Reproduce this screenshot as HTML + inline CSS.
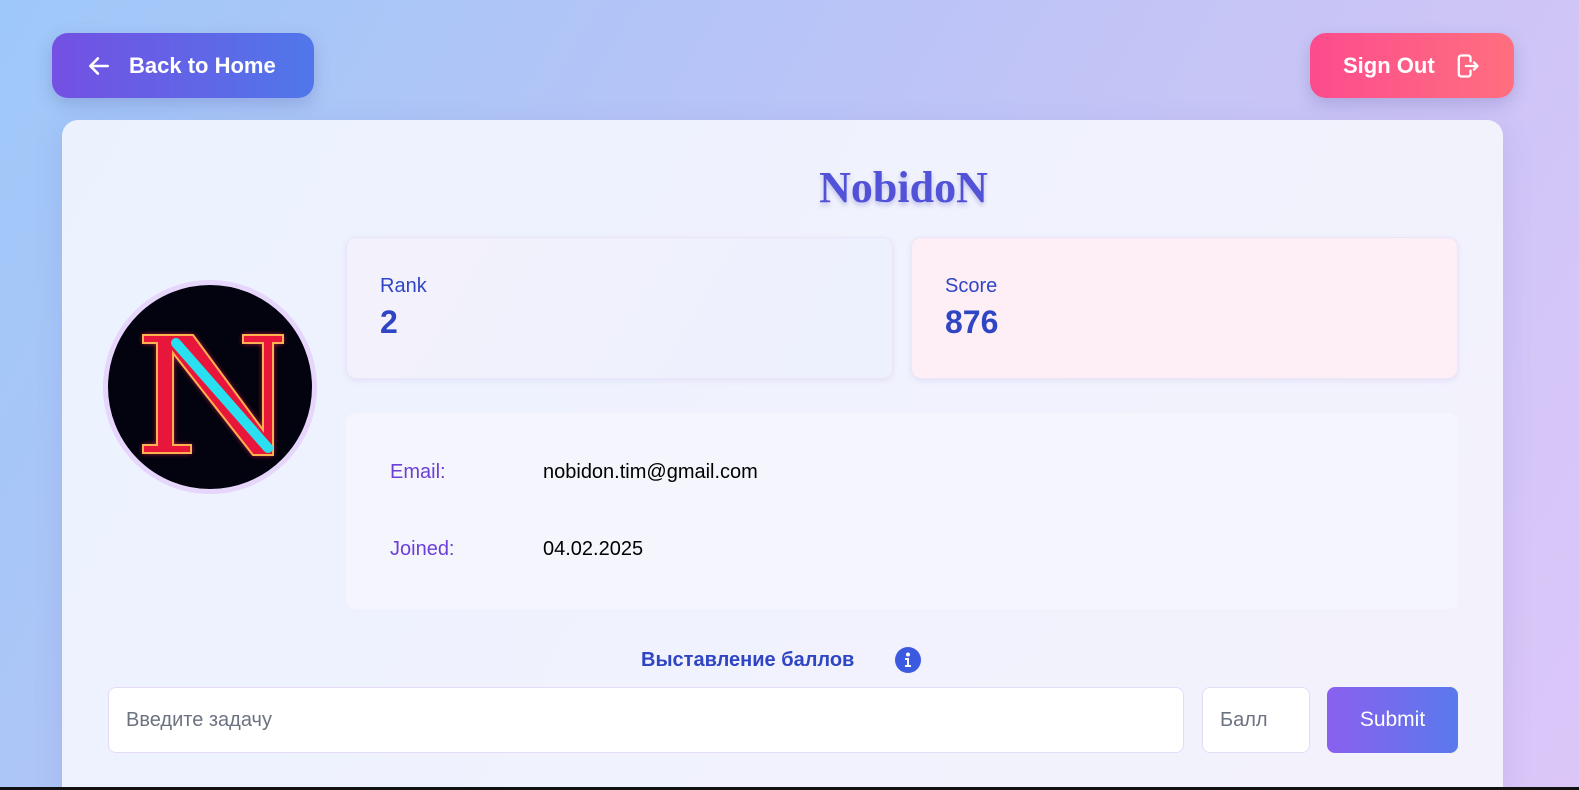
<!DOCTYPE html>
<html style="overflow:hidden;width:1579px;height:790px"><head><meta charset="utf-8"><style>
*{box-sizing:border-box;margin:0;padding:0}
body{width:1579px;height:790px;overflow:hidden;font-family:"Liberation Sans","Noto Sans CJK SC",sans-serif;background:linear-gradient(120deg,#9ec8f8 0%,#b5c4f7 35%,#cbc5f6 70%,#dcc6f8 100%);position:relative}
.btn{position:absolute;top:33px;height:65px;border-radius:16px;color:#fff;font-weight:bold;font-size:22px;display:flex;align-items:center;box-shadow:0 6px 16px rgba(80,80,160,.25)}
.back{left:52px;width:262px;background:linear-gradient(90deg,#7450e3,#5077ea);padding-left:34px}
.out{left:1310px;width:204px;background:linear-gradient(90deg,#fd4b8e,#ff6f7e);padding-left:33px}
.card{position:absolute;left:62px;top:120px;width:1441px;height:670px;border-radius:16px 16px 0 0;background:linear-gradient(120deg,#ebf2fe,#f1f2fd 60%,#f3f1fc);box-shadow:0 8px 30px rgba(100,90,180,.15)}
.name{position:absolute;left:0;width:100%;top:162px;text-align:center;font-family:"Liberation Serif",serif;font-weight:bold;font-size:44px;color:#5252d8;text-shadow:0 3px 5px rgba(80,80,180,.3);padding-left:228px}
.stat{position:absolute;top:237px;width:547px;height:142px;border-radius:10px;border:1px solid #ece4f8;box-shadow:0 2px 6px rgba(120,100,200,.1);padding:37px 0 0 33px;color:#2f45c4}
.stat .l{font-size:20px}.stat .v{font-size:32px;font-weight:bold;margin-top:6px}
.info{position:absolute;left:346px;top:413px;width:1112px;height:196px;border-radius:10px;background:#f5f6fd;font-size:20px}
.row{position:absolute;left:44px}
.row b{font-weight:normal;color:#6c3fd6;display:inline-block;width:153px}
.av{position:absolute;left:103px;top:280px;width:214px;height:214px;border-radius:50%;background:#02030f;border:5px solid #e6d6fb;overflow:hidden}
.ttl{position:absolute;top:649px;left:641px;font-size:20px;font-weight:bold;color:#2f45c4}
.inp{position:absolute;top:687px;height:66px;border-radius:8px;background:#fff;border:1px solid #e4dcf7;font-size:20px;color:#6b7280;padding:21px 0 0 17px}
.sub{position:absolute;left:1327px;top:687px;width:131px;height:66px;border-radius:8px;background:linear-gradient(90deg,#8a60ee,#5a79ec);color:#fff;font-size:21px;text-align:center;line-height:66px}
</style></head><body>
<div class="btn back"><svg width="26" height="26" viewBox="0 0 24 24" fill="none" stroke="#fff" stroke-width="2.4" stroke-linecap="round" stroke-linejoin="round"><path d="M20 12H4M11 5l-7 7 7 7"/></svg><span style="margin-left:17px">Back to Home</span></div>
<div class="btn out">Sign Out<svg style="margin-left:18px" width="28" height="28" viewBox="0 0 24 24" fill="none" stroke="#fff" stroke-width="2" stroke-linecap="round" stroke-linejoin="round"><path d="M15 8V5a2 2 0 0 0-2-2H7a2 2 0 0 0-2 2v14a2 2 0 0 0 2 2h6a2 2 0 0 0 2-2v-3M11 12h10M18 9l3 3-3 3"/></svg></div>
<div class="card"></div>
<div class="name">NobidoN</div>
<div class="av"><svg width="204" height="204" viewBox="0 0 204 204">
<defs><filter id="g"><feGaussianBlur stdDeviation="3"/></filter></defs>
<g filter="url(#g)" opacity=".9"><path d="M35 50h50l70 95V58h-20v-8h40v8h-10v112h-20L65 68v92h18v8H35v-8h14V58H35z" fill="#ff2a5a"/></g>
<path d="M35 50h50l70 95V58h-20v-8h40v8h-10v112h-20L65 68v92h18v8H35v-8h14V58H35z" fill="#e8163a" stroke="#ffb050" stroke-width="2"/>
<path d="M68 58l92 105" stroke="#29e0f0" stroke-width="10" stroke-linecap="round"/>
</svg></div>
<div class="stat" style="left:346px;background:linear-gradient(120deg,#f3f1fc,#ecf1fd)"><div class="l">Rank</div><div class="v">2</div></div>
<div class="stat" style="left:911px;background:#fdeff5"><div class="l">Score</div><div class="v">876</div></div>
<div class="info"><div class="row" style="top:48px"><b>Email:</b>nobidon.tim@gmail.com</div><div class="row" style="top:125px"><b>Joined:</b>04.02.2025</div></div>
<div class="ttl">Выставление баллов</div>
<svg style="position:absolute;left:894px;top:646px" width="28" height="28" viewBox="0 0 28 28"><circle cx="14" cy="14" r="13" fill="#3b5ae0"/><circle cx="14" cy="8.5" r="2" fill="#fff"/><path d="M11 12h4v7h2v2h-6v-2h2v-5h-2z" fill="#fff"/></svg>
<div class="inp" style="left:108px;width:1076px">Введите задачу</div>
<div class="inp" style="left:1202px;width:108px">Балл</div>
<div class="sub">Submit</div>
<div style="position:absolute;left:0;top:787px;width:1579px;height:3px;background:#111"></div>
</body></html>
